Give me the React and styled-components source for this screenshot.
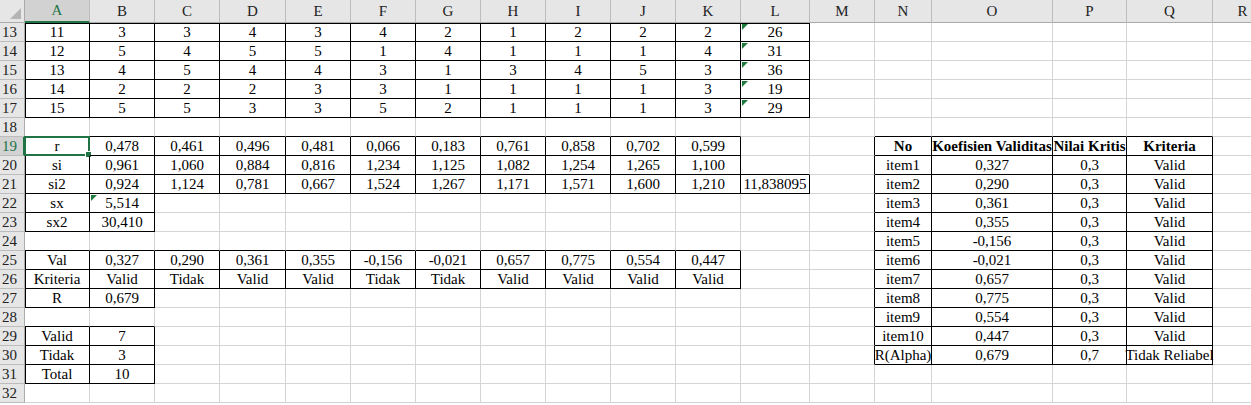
import React from 'react';
import styled, { createGlobalStyle } from 'styled-components';

const Global = createGlobalStyle`
  body { margin: 0; background: #fff; overflow: hidden; }
`;

const COLS = ['A','B','C','D','E','F','G','H','I','J','K','L','M','N','O','P','Q','R'];
const WIDTHS = [65,65,65,66,65,65,65,65,65,65,65,69,65,57,121,74,86,60];
const ROWS = Array.from({ length: 20 }, (_, i) => 13 + i);

const data = {
  13: { A:'11',B:'3',C:'3',D:'4',E:'3',F:'4',G:'2',H:'1',I:'2',J:'2',K:'2',L:'26' },
  14: { A:'12',B:'5',C:'4',D:'5',E:'5',F:'1',G:'4',H:'1',I:'1',J:'1',K:'4',L:'31' },
  15: { A:'13',B:'4',C:'5',D:'4',E:'4',F:'3',G:'1',H:'3',I:'4',J:'5',K:'3',L:'36' },
  16: { A:'14',B:'2',C:'2',D:'2',E:'3',F:'3',G:'1',H:'1',I:'1',J:'1',K:'3',L:'19' },
  17: { A:'15',B:'5',C:'5',D:'3',E:'3',F:'5',G:'2',H:'1',I:'1',J:'1',K:'3',L:'29' },
  19: { A:'r',B:'0,478',C:'0,461',D:'0,496',E:'0,481',F:'0,066',G:'0,183',H:'0,761',I:'0,858',J:'0,702',K:'0,599',
        N:'No',O:'Koefisien Validitas',P:'Nilai Kritis',Q:'Kriteria' },
  20: { A:'si',B:'0,961',C:'1,060',D:'0,884',E:'0,816',F:'1,234',G:'1,125',H:'1,082',I:'1,254',J:'1,265',K:'1,100',
        N:'item1',O:'0,327',P:'0,3',Q:'Valid' },
  21: { A:'si2',B:'0,924',C:'1,124',D:'0,781',E:'0,667',F:'1,524',G:'1,267',H:'1,171',I:'1,571',J:'1,600',K:'1,210',L:'11,838095',
        N:'item2',O:'0,290',P:'0,3',Q:'Valid' },
  22: { A:'sx',B:'5,514',N:'item3',O:'0,361',P:'0,3',Q:'Valid' },
  23: { A:'sx2',B:'30,410',N:'item4',O:'0,355',P:'0,3',Q:'Valid' },
  24: { N:'item5',O:'-0,156',P:'0,3',Q:'Valid' },
  25: { A:'Val',B:'0,327',C:'0,290',D:'0,361',E:'0,355',F:'-0,156',G:'-0,021',H:'0,657',I:'0,775',J:'0,554',K:'0,447',
        N:'item6',O:'-0,021',P:'0,3',Q:'Valid' },
  26: { A:'Kriteria',B:'Valid',C:'Tidak',D:'Valid',E:'Valid',F:'Tidak',G:'Tidak',H:'Valid',I:'Valid',J:'Valid',K:'Valid',
        N:'item7',O:'0,657',P:'0,3',Q:'Valid' },
  27: { A:'R',B:'0,679',N:'item8',O:'0,775',P:'0,3',Q:'Valid' },
  28: { N:'item9',O:'0,554',P:'0,3',Q:'Valid' },
  29: { A:'Valid',B:'7',N:'item10',O:'0,447',P:'0,3',Q:'Valid' },
  30: { A:'Tidak',B:'3',N:'R(Alpha)',O:'0,679',P:'0,7',Q:'Tidak Reliabel' },
  31: { A:'Total',B:'10' },
};

const boxes = [
  ['A',13,'L',17], ['A',19,'K',21], ['L',21,'L',21], ['A',22,'B',23],
  ['A',25,'K',26], ['A',27,'B',27], ['A',29,'B',31], ['N',19,'Q',30],
];
const ci = (c) => COLS.indexOf(c);
const boxed = (c, r) => c >= 0 && c < COLS.length &&
  boxes.some(([c1, r1, c2, r2]) => c >= ci(c1) && c <= ci(c2) && r >= r1 && r <= r2);
const flagged = { '13L':1,'14L':1,'15L':1,'16L':1,'17L':1,'22B':1 };

const Sheet = styled.div`
  display: grid;
  grid-template-columns: 25px ${WIDTHS.map((w) => w + 'px').join(' ')};
  grid-template-rows: 23px repeat(20, 19px);
  font-family: "Liberation Serif", "Times New Roman", serif;
  font-size: 15px;
  color: #000;
`;

const Corner = styled.div`
  background: #e6e6e6;
  border-right: 1px solid #ababab;
  border-bottom: 1px solid #ababab;
  position: relative;
  &::after {
    content: '';
    position: absolute;
    right: 3px;
    bottom: 3px;
    border-left: 11px solid transparent;
    border-bottom: 11px solid #b4b4b4;
  }
`;

const ColHead = styled.div`
  background: ${(p) => (p.$active ? '#d2d2d2' : '#e6e6e6')};
  color: ${(p) => (p.$active ? '#217346' : '#222')};
  border-right: 1px solid #bcbcbc;
  border-bottom: ${(p) => (p.$active ? '2px solid #217346' : '1px solid #ababab')};
  display: flex;
  align-items: center;
  justify-content: center;
  font-size: 15px;
  box-sizing: border-box;
`;

const RowHead = styled.div`
  background: ${(p) => (p.$active ? '#d2d2d2' : '#e6e6e6')};
  color: ${(p) => (p.$active ? '#217346' : '#222')};
  border-right: ${(p) => (p.$active ? '2px solid #217346' : '1px solid #ababab')};
  border-bottom: 1px solid #bcbcbc;
  display: flex;
  align-items: center;
  padding-left: 2px;
  font-size: 15px;
  box-sizing: border-box;
`;

const Cell = styled.div`
  position: relative;
  box-sizing: border-box;
  border-right: 1px solid ${(p) => (p.$right ? '#000' : '#d4d4d4')};
  border-bottom: 1px solid ${(p) => (p.$bottom ? '#000' : '#d4d4d4')};
  box-shadow: ${(p) => [p.$left && 'inset 1px 0 0 #000', p.$top && 'inset 0 1px 0 #000'].filter(Boolean).join(',') || 'none'};
  display: flex;
  align-items: center;
  justify-content: center;
  white-space: nowrap;
  overflow: visible;
  font-weight: ${(p) => (p.$bold ? 700 : 400)};
  line-height: 1;
  padding-top: 1px;
`;

const Flag = styled.span`
  position: absolute;
  left: 1px;
  top: 1px;
  border-top: 6px solid #1e7a3c;
  border-right: 6px solid transparent;
`;

const Selection = styled.span`
  position: absolute;
  inset: -1px -1px -1px -1px;
  border: 2px solid #217346;
  pointer-events: none;
  &::after {
    content: '';
    position: absolute;
    right: -4px;
    bottom: -4px;
    width: 5px;
    height: 5px;
    background: #217346;
    border: 1px solid #fff;
  }
`;

export default function App() {
  return (
    <>
      <Global />
      <Sheet>
        <Corner />
        {COLS.map((c) => (
          <ColHead key={c} $active={c === 'A'}>{c}</ColHead>
        ))}
        {ROWS.map((r) => (
          <React.Fragment key={r}>
            <RowHead $active={r === 19}>{r}</RowHead>
            {COLS.map((c, i) => {
              const me = boxed(i, r);
              return (
                <Cell
                  key={c}
                  $right={me || boxed(i + 1, r)}
                  $bottom={me || boxed(i, r + 1)}
                  $left={me && i === 0}
                  $top={me && !boxed(i, r - 1) && r === 13}
                  $bold={r === 19 && i >= ci('N')}
                >
                  {flagged[r + c] && <Flag />}
                  {data[r]?.[c] || ''}
                  {r === 19 && c === 'A' && <Selection />}
                </Cell>
              );
            })}
          </React.Fragment>
        ))}
      </Sheet>
    </>
  );
}
